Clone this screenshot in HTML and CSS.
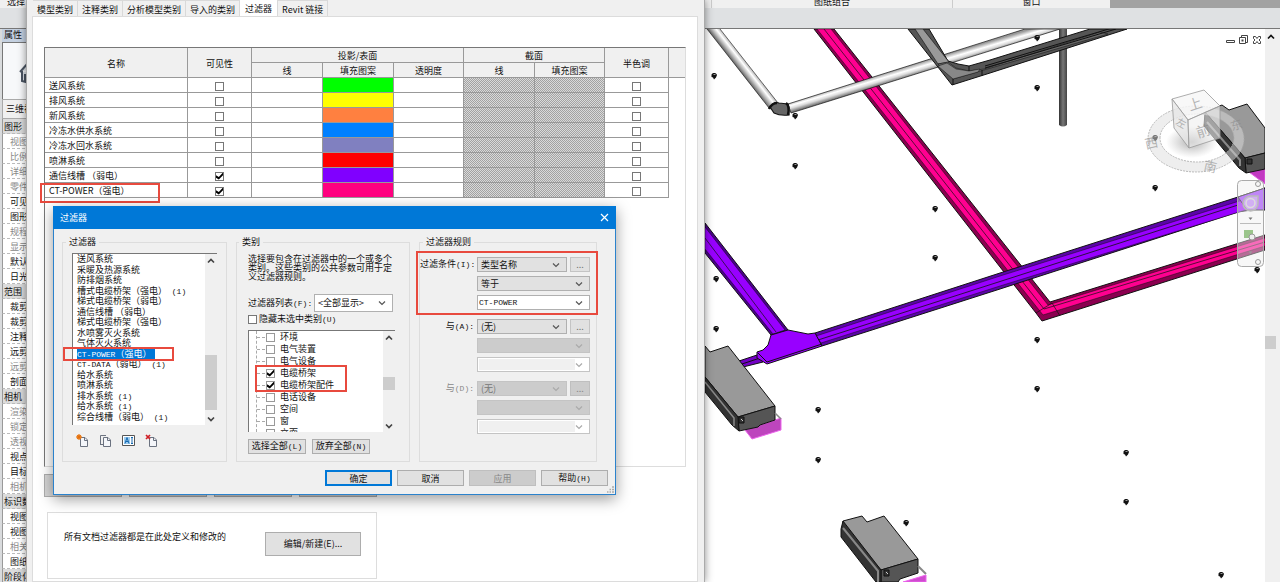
FILE: index.html
```html
<!DOCTYPE html>
<html lang="zh-CN">
<head>
<meta charset="utf-8">
<title>过滤器</title>
<link rel="stylesheet" href="styles.css">
</head>
<body>
<svg class="defs" aria-hidden="true">
  <symbol id="chev" viewBox="0 0 8 8"><path d="M1 2.5 4 5.5 7 2.5" fill="none" stroke="currentColor" stroke-width="1.2"/></symbol>
  <symbol id="up" viewBox="0 0 8 8"><path d="M1 5.5 4 2.5 7 5.5" fill="none" stroke="currentColor" stroke-width="1.7"/></symbol>
  <symbol id="down" viewBox="0 0 8 8"><path d="M1 2.5 4 5.5 7 2.5" fill="none" stroke="currentColor" stroke-width="1.7"/></symbol>
  <symbol id="page" viewBox="0 0 13 13"><path d="M4.500 3.500H9L11.500 6V12.500H4.500Z" fill="#f4f6fa" stroke="#6b7280"/><path d="M8.500 3.500V6.500H11.500" fill="none" stroke="#6b7280"/></symbol>
</svg>

<div class="app">
  <div class="ribbon">
    <span class="r-left">选择</span><span class="r-mid">图纸组合</span><span class="r-win">窗口</span><span class="r-end"></span>
  </div>
  <div class="band"></div>
  <div class="work">
    <aside class="props">
      <h2>属性</h2>
      <div class="preview"><svg width="18" height="24" viewBox="0 0 18 24"><path d="M1 11 9 2 17 11M3 10V20L10 22V9M10 22 17 19V11" fill="#dde2e8" stroke="#4b5563" stroke-width="2"/><path d="M5 13H8V20H5Z" fill="#4b5563"/></svg></div>
      <div class="view">三维视图</div>
      <ul class="plist">
        <li class="g">图形</li><li class="d">视图比例</li><li class="d">比例值</li><li class="d">详细程度</li><li class="d">零件可见性</li><li>可见性</li><li>图形显示</li><li class="d">规程</li><li class="d">显示隐藏</li><li>默认分析</li><li>日光路径</li>
        <li class="g">范围</li><li>裁剪视图</li><li>裁剪区域</li><li>注释裁剪</li><li>远剪裁</li><li class="d">远剪裁</li><li>剖面框</li>
        <li class="g">相机</li><li class="d">渲染设置</li><li class="d">锁定方向</li><li class="d">透视图</li><li>视点高度</li><li>目标高度</li><li class="d">相机位置</li>
        <li class="g">标识数据</li><li>视图样板</li><li>视图名称</li><li class="d">相关性</li><li>图纸标题</li>
        <li class="g">阶段化</li>
      </ul>
    </aside>

    <main class="canvas">
      <svg class="scene" viewBox="705 29 560 553" preserveAspectRatio="xMinYMin slice" role="img" aria-label="三维视图">
        <defs>
          <linearGradient id="p1" gradientUnits="userSpaceOnUse" x1="737" y1="68" x2="746" y2="61"><stop offset="0" stop-color="#555"/><stop offset=".3" stop-color="#aaa"/><stop offset=".65" stop-color="#fff"/><stop offset="1" stop-color="#aaa"/></linearGradient>
          <linearGradient id="p2" gradientUnits="userSpaceOnUse" x1="888" y1="72" x2="891" y2="82"><stop offset="0" stop-color="#999"/><stop offset=".4" stop-color="#fff"/><stop offset=".65" stop-color="#ddd"/><stop offset="1" stop-color="#777"/></linearGradient>
          <linearGradient id="p3"><stop offset="0" stop-color="#333"/><stop offset=".5" stop-color="#777"/><stop offset="1" stop-color="#444"/></linearGradient>
          <radialGradient id="sh"><stop offset="0" stop-color="#777" stop-opacity=".6"/><stop offset="1" stop-color="#999" stop-opacity="0"/></radialGradient>
          <g id="s"><path d="M-2.500 -1.500C-1 -3.500 2 -3.500 3 -1L2 1.500 0 3.500-1 1.500-2.500 1Z" fill="#111"/><path d="M-.5-1.500H1.500" stroke="#999"/></g>
        </defs>
        <g stroke="#111" stroke-width="1" stroke-linejoin="round">
          <!-- magenta tray -->
          <path d="M814 29H834L1050 302 1265 235V250L1042 321 1036 313Z" fill="#8b0050"/>
          <path d="M817 29H831L1048 305 1265 238V246L1043 315Z" fill="#ff0090" stroke-width=".5"/>
          <path d="M824 29 1044 309 1265 242M1036 313 1052 303M1052 303 1060 316" fill="none" stroke-width=".7"/>
          <!-- round pipes -->
          <path d="M707 29H720L778 103 769 108Z" fill="url(#p1)" stroke="none"/>
          <path d="M707 29 769 108M720 29 778 103" fill="none" stroke-width=".6"/>
          <path d="M788 104 1025 29H1060L791 113Z" fill="url(#p2)" stroke-width=".7"/>
          <path d="M770 107Q774 101 779 103L788 104 789 115Q780 116 774 113Z" fill="#666" stroke-width="1.200"/>
          <path d="M786 103Q790 106 788 115M769 109Q772 103 777 103" fill="none" stroke-width="2.500"/>
          <path d="M1059 29V125Q1063 128 1067 125V29Z" fill="url(#p3)" stroke="none"/>
          <!-- gray tray -->
          <path d="M908 29H929L948 61 958 64 969 66 990 60 1090 29H1127L990 73 952 85 934 62Z" fill="#555"/>
          <path d="M915 29H923L949 62 938 64Z" fill="#999" stroke-width=".6"/>
          <path d="M938 64 948 62 956 68 969 71 984 69 1100 32 1108 34 953 79Z" fill="#666" stroke-width=".5"/>
          <path d="M938 66 947 63 956 69 969 71 980 69 978 72 953 79Z" fill="#888" stroke-width=".5"/>
          <path d="M969 66V71M953 79V85M982 70V76M985 66 1112 28M985 68 1116 29" fill="none"/>
          <!-- violet tray -->
          <path d="M705 223 788 330 771 335 705 253Z" fill="#4b008c"/>
          <path d="M705 227 785 330 773 334 705 249Z" fill="#9800ff" stroke-width=".5"/>
          <path d="M705 238 776 332" fill="none" stroke-width=".7"/>
          <path d="M815 333 1000 273 1238 197 1265 188V208L1238 212 1000 289 822 346Z" fill="#5b05a8"/>
          <path d="M816 336 1000 276 1265 193V204L1000 286 821 343Z" fill="#9800ff" stroke-width=".5"/>
          <path d="M818 340 1238 205" fill="none" stroke-width=".8"/>
          <path d="M739 361 757 355 763 362 743 367ZM742 364 760 358" fill="#7200c4"/>
          <path d="M771 335 788 330 808 334 815 333 822 346 767 364 757 358V352L763 350 768 345Z" fill="#9800ff"/>
          <path d="M767 362 822 344M758 353 767 362" fill="none"/>
          <path d="M1238 197 1265 188V210H1247Z" fill="#9a32ff"/>
          <!-- equipment at the right edge -->
          <path d="M1249 172 1265 168V184Z" fill="#c238c2" stroke="#e060e0"/>
          <path d="M1205 112 1222 105 1229 110 1247 104 1265 128V153L1245 158Z" fill="#999"/>
          <path d="M1245 158 1265 153V169L1246 173Z" fill="#555"/>
          <path d="M1205 112 1245 158 1246 173 1239 168 1204 126Z" fill="#333"/>
          <path d="M1207 122 1240 160V166" fill="none" stroke="#888" stroke-width="2"/>
          <path d="M1247 159H1252V164H1247Z" fill="#333"/>
          <!-- equipment at the left edge -->
          <path d="M745 430 781 418V430L752 439Z" fill="#bd45bd" stroke="#ed65ed"/>
          <path d="M705 346 710 352 728 346 775 406 738 417 705 377Z" fill="#999"/>
          <path d="M738 417 775 406V420L760 425 758 427 739 431Z" fill="#555"/>
          <path d="M705 377 738 417 739 431 732 425 705 392Z" fill="#333"/>
          <path d="M705 382 734 418V426M775 413 781 419" fill="none" stroke="#888" stroke-width="1.500"/>
          <path d="M739 417H744V423H739Z" fill="#333"/><path d="M741 419 743 421" stroke="#ccc"/>
          <!-- equipment at the bottom -->
          <path d="M903 582 926 575V582Z" fill="#d04bd0" stroke="#ed65ed"/>
          <path d="M843 521 862 516 867 522 884 516 918 559 881 570 843 527Z" fill="#999"/>
          <path d="M881 570 918 559V573L900 579 898 582H881Z" fill="#555"/>
          <path d="M843 521 881 570V582H876L841 537V529Z" fill="#333"/>
          <path d="M843 528 878 571V582M918 566 926 574" fill="none" stroke="#888" stroke-width="2"/>
          <path d="M884 570H889V576H884Z" fill="#333"/><path d="M886 572 888 574" stroke="#ccc"/>
        </g>
        <g>
          <use href="#s" x="714" y="76"/><use href="#s" x="795" y="116"/><use href="#s" x="795" y="166"/><use href="#s" x="1037" y="38"/><use href="#s" x="1037" y="88"/><use href="#s" x="1155" y="138"/><use href="#s" x="1155" y="188"/><use href="#s" x="935" y="209"/><use href="#s" x="935" y="258"/><use href="#s" x="716" y="279"/><use href="#s" x="716" y="329"/><use href="#s" x="818" y="410"/><use href="#s" x="818" y="460"/><use href="#s" x="1037" y="340"/><use href="#s" x="1037" y="389"/><use href="#s" x="1126" y="453"/><use href="#s" x="1126" y="502"/><use href="#s" x="906" y="523"/><use href="#s" x="1221" y="575"/><use href="#s" x="1257" y="270"/>
        </g>
        <!-- view cube -->
        <ellipse cx="1192" cy="142" rx="26" ry="16" fill="url(#sh)"/>
        <path fill-rule="evenodd" d="M1148 139A48 33 0 1 0 1244 139A48 33 0 1 0 1148 139ZM1160 138A37 24 0 1 1 1234 138A37 24 0 1 1 1160 138Z" fill="#ddd" fill-opacity=".5" stroke="#aaa" stroke-width=".8" stroke-dasharray="2 1"/>
        <g stroke="#999" stroke-width=".8" stroke-linejoin="round" fill-opacity=".82">
          <path d="M1172 99 1204 90 1220 106 1188 120Z" fill="#f6f6f6"/>
          <path d="M1172 99 1188 120 1189 148 1174 128Z" fill="#e6e6e6"/>
          <path d="M1188 120 1220 106V138L1189 148Z" fill="#eee" fill-opacity=".6"/>
        </g>
        <g class="cube-text">
          <text transform="translate(1190 111) rotate(-18)" font-size="14">上</text>
          <text transform="translate(1175 124) rotate(28)" font-size="10">左</text>
          <text transform="translate(1198 138) rotate(-18)" font-size="14">前</text>
          <text transform="translate(1146 149) rotate(-12)" font-size="13">西</text>
          <text transform="translate(1203 170) rotate(12)" font-size="13">南</text>
          <text transform="translate(1232 131) rotate(-18)" font-size="12">东</text>
        </g>
        <!-- navigation bar -->
        <rect x="1237.500" y="180.500" width="26" height="86" rx="4" fill="#eee" fill-opacity=".45" stroke="#aaa"/>
        <g fill="none" stroke="#999">
          <circle cx="1258" cy="184" r="2.500"/><circle cx="1258" cy="262" r="2.500"/>
          <path d="M1251 196H1258V203A7.500 7.500 0 1 1 1251 196Z" fill="#eee" fill-opacity=".4" stroke="#bbb" stroke-width="1.500"/><circle cx="1250.500" cy="203" r="4.500" stroke="#ddd" stroke-width="1.500"/>
          <path d="M1240 223.500H1261" stroke="#bbb"/><path d="M1248.500 217.500H1252.500L1250.500 220Z" fill="#777" stroke="none"/>
          <path d="M1244 230H1253V238H1244Z" fill="#9bc58b" stroke="none"/><circle cx="1252" cy="237" r="3" fill="#eee"/><path d="M1248.500 251.500H1252.500L1250.500 254Z" fill="#999" stroke="none"/>
        </g>
        <!-- view window controls -->
        <g fill="#fff" stroke="#444">
          <path d="M1226.500 40.500H1234.500V42.500H1226.500Z"/><path d="M1241.500 35.500H1247.500V42.500H1241.500Z"/><path d="M1239.500 37.500H1245.500V43.500H1239.500Z"/><path d="M1241.500 40.500H1243.500" stroke-width="2"/>
          <path d="M1253.500 36.500H1255.500L1257 38.500 1258.500 36.500H1260.500V38.500L1259 40 1260.500 41.500V43.500H1258.500L1257 41.500 1255.500 43.500H1253.500V41.500L1255 40 1253.500 38.500Z"/>
        </g>
      </svg>
      <div class="vscroll"><svg width="8" height="8"><use href="#up"/></svg><i></i></div>
    </main>
  </div>
</div>

<section class="vg">
  <nav class="tabs"><button>模型类别</button><button>注释类别</button><button>分析模型类别</button><button>导入的类别</button><button class="on">过滤器</button><button>Revit 链接</button></nav>
  <div class="sheet">
    <div class="tbox">
      <table>
        <colgroup><col class="c-name"><col class="c-chk"><col class="c-pat"><col class="c-pat"><col class="c-num"><col class="c-pat"><col class="c-num"><col class="c-chk"><col></colgroup>
        <thead>
          <tr><th rowspan="2">名称</th><th rowspan="2">可见性</th><th colspan="3">投影/表面</th><th colspan="2">截面</th><th rowspan="2">半色调</th><th rowspan="2" class="last"></th></tr>
          <tr><th>线</th><th>填充图案</th><th>透明度</th><th>线</th><th>填充图案</th></tr>
        </thead>
        <tbody>
          <tr><td>送风系统</td><td><input type="checkbox" aria-label="可见性"></td><td></td><td class="green"></td><td></td><td class="hatch"></td><td class="hatch"></td><td><input type="checkbox" aria-label="半色调"></td></tr>
          <tr><td>排风系统</td><td><input type="checkbox" aria-label="可见性"></td><td></td><td class="yellow"></td><td></td><td class="hatch"></td><td class="hatch"></td><td><input type="checkbox" aria-label="半色调"></td></tr>
          <tr><td>新风系统</td><td><input type="checkbox" aria-label="可见性"></td><td></td><td class="orange"></td><td></td><td class="hatch"></td><td class="hatch"></td><td><input type="checkbox" aria-label="半色调"></td></tr>
          <tr><td>冷冻水供水系统</td><td><input type="checkbox" aria-label="可见性"></td><td></td><td class="blue"></td><td></td><td class="hatch"></td><td class="hatch"></td><td><input type="checkbox" aria-label="半色调"></td></tr>
          <tr><td>冷冻水回水系统</td><td><input type="checkbox" aria-label="可见性"></td><td></td><td class="slate"></td><td></td><td class="hatch"></td><td class="hatch"></td><td><input type="checkbox" aria-label="半色调"></td></tr>
          <tr><td>喷淋系统</td><td><input type="checkbox" aria-label="可见性"></td><td></td><td class="red"></td><td></td><td class="hatch"></td><td class="hatch"></td><td><input type="checkbox" aria-label="半色调"></td></tr>
          <tr><td>通信线槽 （弱电）</td><td><input type="checkbox" checked aria-label="可见性"></td><td></td><td class="violet"></td><td></td><td class="hatch"></td><td class="hatch"></td><td><input type="checkbox" aria-label="半色调"></td></tr>
          <tr class="marked"><td>CT-POWER（强电）</td><td><input type="checkbox" checked aria-label="可见性"></td><td></td><td class="pink"></td><td></td><td class="hatch"></td><td class="hatch"></td><td><input type="checkbox" aria-label="半色调"></td></tr>
        </tbody>
      </table>
    </div>
    <div class="acts"><button aria-label="添加"></button><button aria-label="删除"></button><button aria-label="向上"></button><button aria-label="向下"></button></div>
    <div class="note"><p>所有文档过滤器都是在此处定义和修改的</p><button>编辑/新建(E)...</button></div>
  </div>
</section>

<section class="dlg" role="dialog" aria-label="过滤器">
  <header><h1>过滤器</h1><button aria-label="关闭"><svg width="9" height="9" viewBox="0 0 9 9"><path d="M1 1 8 8M8 1 1 8" stroke="#fff" stroke-width="1.200"/></svg></button></header>
  <div class="groups">
    <div class="grp g1">
      <h3>过滤器</h3>
      <div class="list">
        <ul role="listbox" aria-label="过滤器">
          <li>送风系统</li><li>采暖及热源系统</li><li>防排烟系统</li><li>槽式电缆桥架（强电）<span class="n"> (1)</span></li><li>梯式电缆桥架（弱电）</li><li>通信线槽 （弱电）</li><li>梯式电缆桥架（强电）</li><li>水喷雾灭火系统</li><li>气体灭火系统</li><li class="sel"><span><span class="n">CT-POWER</span>（强电）</span></li><li><span class="n">CT-DATA</span>（弱电）<span class="n"> (1)</span></li><li>给水系统</li><li>喷淋系统</li><li>排水系统<span class="n"> (1)</span></li><li>给水系统<span class="n"> (1)</span></li><li>综合线槽（弱电）<span class="n"> (1)</span></li>
        </ul>
        <div class="sb"><svg width="8" height="8"><use href="#up"/></svg><i></i><svg width="8" height="8"><use href="#down"/></svg></div>
      </div>
      <div class="tools">
        <button aria-label="新建"><svg width="13" height="13"><use href="#page"/><circle cx="3" cy="3" r="2.500" fill="#f08a24"/><path d="M3 0V6M0 3H6M1 1 5 5M5 1 1 5" stroke="#e06a10" stroke-width=".7"/></svg></button>
        <button aria-label="复制"><svg width="13" height="13"><path d="M1.500 11V1.500H7" fill="none" stroke="#6b7280"/><path d="M1.500 10.500H4" stroke="#6b7280"/><use href="#page"/></svg></button>
        <button aria-label="重命名"><svg width="13" height="13" viewBox="0 0 13 13"><path d="M.5 1.500H12.500V11.500H.5Z" fill="#fff" stroke="#555"/><path d="M2 3H8V10H2Z" fill="#9cccf0"/><path d="M3 9.500 5 3.500 7 9.500M4 7.500H6M9 3.500H11M10 3.500V9.500M9 9.500H11" fill="none" stroke="#1669b0"/></svg></button>
        <button aria-label="删除"><svg width="13" height="13"><use href="#page"/><path d="M1 1 5 5M5 1 1 5" stroke="#d11f26" stroke-width="1.700"/></svg></button>
      </div>
    </div>

    <div class="grp g2">
      <h3>类别</h3>
      <p>选择要包含在过滤器中的一个或多个类别。这些类别的公共参数可用于定义过滤器规则。</p>
      <div class="row"><label for="flist">过滤器列表<span class="n">(F):</span></label><span class="combo white"><select id="flist"><option>&lt;全部显示&gt;</option></select><svg width="8" height="8"><use href="#chev"/></svg></span></div>
      <label class="hide"><input type="checkbox"><span>隐藏未选中类别<span class="n">(U)</span></span></label>
      <div class="tree">
        <ul>
          <li><label><input type="checkbox">环境</label></li><li><label><input type="checkbox">电气装置</label></li><li><label><input type="checkbox">电气设备</label></li><li><label><input type="checkbox" checked>电缆桥架</label></li><li><label><input type="checkbox" checked>电缆桥架配件</label></li><li><label><input type="checkbox">电话设备</label></li><li><label><input type="checkbox">空间</label></li><li><label><input type="checkbox">窗</label></li><li><label><input type="checkbox">立面</label></li>
        </ul>
        <div class="sb"><svg width="8" height="8"><use href="#up"/></svg><i></i><svg width="8" height="8"><use href="#down"/></svg></div>
      </div>
      <div class="pick"><button>选择全部<span class="n">(L)</span></button><button>放弃全部<span class="n">(N)</span></button></div>
    </div>

    <div class="grp g3">
      <h3>过滤器规则</h3>
      <div class="rule marked">
        <label for="r1">过滤条件<span class="n">(I):</span></label><span class="combo"><select id="r1"><option>类型名称</option></select><svg width="8" height="8"><use href="#chev"/></svg></span><button class="dots">...</button>
        <span class="combo wide"><select aria-label="运算符"><option>等于</option></select><svg width="8" height="8"><use href="#chev"/></svg></span>
        <span class="combo wide white"><input type="text" class="n" value="CT-POWER" aria-label="值"><svg width="8" height="8"><use href="#chev"/></svg></span>
      </div>
      <div class="rule">
        <label for="r2">与<span class="n">(A):</span></label><span class="combo"><select id="r2"><option>(无)</option></select><svg width="8" height="8"><use href="#chev"/></svg></span><button class="dots">...</button>
        <span class="combo wide off"><select disabled aria-label="运算符"></select><svg width="8" height="8"><use href="#chev"/></svg></span>
        <span class="combo wide white off"><input type="text" disabled aria-label="值"><svg width="8" height="8"><use href="#chev"/></svg></span>
      </div>
      <div class="rule dim">
        <label for="r3">与<span class="n">(D):</span></label><span class="combo off"><select id="r3" disabled><option>(无)</option></select><svg width="8" height="8"><use href="#chev"/></svg></span><button class="dots" disabled>...</button>
        <span class="combo wide off"><select disabled aria-label="运算符"></select><svg width="8" height="8"><use href="#chev"/></svg></span>
        <span class="combo wide white off"><input type="text" disabled aria-label="值"><svg width="8" height="8"><use href="#chev"/></svg></span>
      </div>
    </div>
  </div>
  <footer><button class="ok">确定</button><button>取消</button><button disabled>应用</button><button>帮助<span class="n">(H)</span></button></footer>
  <svg class="grip" width="7" height="7"><path d="M5 1H7M5 3.500H7M2.500 3.500H4M5 6H7M2.500 6H4M0 6H1.500" stroke="#aaa" stroke-width="1.500"/></svg>
</section>
</body>
</html>
```

FILE: styles.css
```css
*, *::before, *::after { box-sizing: border-box; margin: 0; padding: 0; }
body {
  font: 9px/12px "Noto Sans CJK SC", sans-serif;
  color: #111;
  background: #fff;
  height: 100vh;
  overflow: hidden;
  position: relative;
}
button, input, select { font: inherit; color: inherit; appearance: none; border-radius: 0; }
button { background: #e1e1e1; border: 1px solid #adadad; white-space: nowrap; }
button:disabled { background: #ccc; border-color: #bfbfbf; color: #888; }
ul { list-style: none; }
h1, h2, h3 { font-size: 9px; font-weight: 400; }
svg { display: block; }
.defs { position: absolute; width: 0; height: 0; }
.n { font-family: "Liberation Mono", monospace; font-size: 8px; white-space: pre; }

input[type="checkbox"] {
  width: 9px; height: 9px;
  flex: none;
  border: 1px solid #777;
  background: #fff;
  display: grid;
}
input[type="checkbox"]:checked::before {
  content: "";
  background: #000;
  clip-path: polygon(0 40%, 40% 65%, 100% 0, 100% 40%, 40% 100%, 0 75%);
}

/* main window */
.app { height: 100%; display: flex; flex-direction: column; }
.ribbon { flex: none; height: 8px; display: flex; background: #f0f0f0; overflow: hidden; line-height: 10px; }
.ribbon span { flex: none; margin-top: -3px; }
.ribbon .r-left { width: 711px; padding-left: 7px; }
.ribbon .r-mid { width: 241px; text-align: center; border-left: 1px solid #ccc; }
.ribbon .r-win { width: 158px; text-align: center; border-left: 1px solid #ccc; }
.ribbon .r-end { flex: 1; background: #a2a2a2; margin-top: 0; }
.band { flex: none; height: 21px; background: #dfe1e3; border-bottom: 1px solid #777; }
.work { flex: 1; min-height: 0; display: flex; }
.props { flex: none; width: 705px; border-left: 2px solid #d9dbdd; background: #fff; }
.props h2 { background: #c4d0e0; padding-left: 2px; height: 13px; }
.preview { height: 57px; border: 1px solid #777; border-width: 1px 0 0 1px; padding: 18px 0 0 16px; background: #f7f8fa; }
.view { height: 20px; border: 1px solid #aaa; background: #f0f0f0; line-height: 18px; padding-left: 3px; }
.plist li { height: 15px; line-height: 15px; padding-left: 7px; border-bottom: 1px dashed #bbb; border-left: 1px solid #999; }
.plist .g { background: #dcdcdc; padding-left: 1px; }
.plist .d { color: #888; }
.canvas { flex: 1; min-width: 0; display: flex; }
.scene { flex: 1; min-width: 0; height: 100%; }
.cube-text { fill: #888; fill-opacity: .6; }
.vscroll { flex: none; width: 15px; background: #f0f0f0; display: flex; flex-direction: column; align-items: flex-start; padding: 4px 2px; }
.vscroll i { width: 11px; height: 13px; margin: 295px 0 0 -2px; background: #cdcdcd; }

/* visibility window */
.vg {
  position: absolute; left: 26px; top: 0; bottom: 0; width: 679px;
  background: #f0f0f0;
  border: solid #aaa; border-width: 0 1px;
  padding: 0 6px 0 5px;
  box-shadow: 0 0 8px rgba(0, 0, 0, .45);
  display: flex; flex-direction: column;
}
.tabs { flex: none; height: 16px; display: flex; align-items: flex-end; padding-left: 1px; }
.tabs button { height: 16px; border: 1px solid #d9d9d9; border-width: 1px 1px 0 0; background: #f0f0f0; padding: 1px 4px 0; line-height: 15px; }
.tabs .on { background: #fff; padding: 0 5px; margin-bottom: -1px; height: 17px; line-height: 12px; border-top: 0; }
.sheet { flex: 1; border: 1px solid #dcdcdc; background: #fff; padding: 30px 11px 0; }
.tbox { height: 420px; border: 1px solid #ddd; border-left: 1px solid #777; border-top: 1px solid #777; }
table { width: 100%; table-layout: fixed; border-spacing: 0; }
.c-name { width: 143px; }
.c-chk { width: 64px; }
.c-pat { width: 71px; }
.c-num { width: 70px; }
th, td { height: 15px; padding-top: 2px; line-height: 12px; border: solid #999; border-width: 0 1px 1px 0; white-space: nowrap; }
th { font-weight: 400; background: #f0f0f0; text-align: center; }
th.last { border-right: 0; }
td:first-child { padding-left: 4px; }
td input[type="checkbox"] { margin: 0 auto; }
tr.marked td:first-child { position: relative; }
tr.marked td:first-child::after {
  content: ""; position: absolute; left: -5px; top: 0; width: 120px; height: 20px;
  border: 2px solid #e84a3e;
}
.green { background: #0f0; } .yellow { background: #ff0; } .orange { background: #ff8040; } .blue { background: #0080ff; }
.slate { background: #8080c0; } .red { background: #f00; } .violet { background: #8000ff; } .pink { background: #ff0080; }
.hatch { background: conic-gradient(#a2a2a2 25%, #dadada 0 50%, #a2a2a2 0 75%, #dadada 0) 0 0 / 2px 2px; }
.acts { display: flex; gap: 7px; padding-top: 7px; }
.acts button { width: 78px; height: 23px; background: #d5d5d5; }
.note { margin: 15px 0 0 3px; width: 330px; height: 67px; border: 1px solid #ddd; display: flex; justify-content: space-between; padding: 18px 15px 0 16px; }
.note p { line-height: 12px; }
.note button { width: 96px; height: 24px; margin-top: 1px; }

/* filter dialog */
.dlg {
  position: absolute; left: 53px; top: 206px; width: 563px;
  background: #f0f0f0;
  border: 1px solid #2b82cc;
  box-shadow: 0 4px 14px rgba(0, 0, 0, .4);
}
.dlg header { height: 23px; margin: -1px -1px 0; background: #0078d7; color: #fff; display: flex; align-items: center; justify-content: space-between; padding: 0 7px; }
.dlg header button { border: 0; background: none; }
.groups { display: flex; gap: 9px; padding: 13px 18px 0 8px; }
.grp { height: 220px; border: 1px solid #ddd; display: flex; flex-direction: column; }
.grp h3 { flex: none; height: 12px; margin: -7px 0 0 3px; padding: 0 3px; align-self: flex-start; background: #f0f0f0; }
.g1 { width: 165px; }
.g2 { width: 174px; padding: 0 13px 0 11px; }
.g2 h3 { margin-left: -9px; }
.g3 { flex: 1; padding-right: 6px; }

.list { margin: 5px 9px 0; height: 172px; background: #fff; border: 1px solid #777; border-width: 1px 0 0 1px; display: flex; }
.list ul { flex: 1; display: flex; flex-direction: column; justify-content: space-between; padding: 0 0 3px; }
.list li { height: 10px; line-height: 10px; padding-left: 4px; white-space: nowrap; }
.sel > span { display: inline-block; background: #0078d7; color: #fff; padding-right: 4px; height: 10px; line-height: 10px; vertical-align: top; }
.g1 .sel { position: relative; }
.g1 .sel::after { content: ""; position: absolute; left: -10px; top: -2px; width: 111px; height: 14px; border: 2px solid #e84a3e; }
.sb { flex: none; width: 12px; background: #f0f0f0; display: flex; flex-direction: column; align-items: center; padding: 3px 0 2px; color: #444; }
.sb i { width: 100%; background: #cdcdcd; }
.list .sb i { height: 55px; margin: 90px 0 auto; }
.tools { display: flex; gap: 10px; padding: 9px 0 0 13px; }
.tools button { border: 0; background: none; }

.g2 p { line-height: 9px; margin: 6px 0 0; width: 145px; }
.row { display: flex; align-items: center; justify-content: space-between; margin-top: 13px; width: 145px; white-space: nowrap; }
.row .combo { width: 79px; height: 18px; }
.hide { display: flex; align-items: center; gap: 2px; margin-top: 1px; }
.tree { margin-top: 4px; height: 102px; width: 147px; background: #fff; border: 1px solid #777; border-width: 1px 0 0 1px; display: flex; position: relative; }
.tree ul { flex: 1; overflow: hidden; margin-left: 7px; border-left: 1px dashed #aaa; }
.tree li { height: 12px; line-height: 12px; }
.tree label { display: flex; align-items: center; gap: 5px; }
.tree label::before { content: ""; width: 8px; margin-right: -4px; border-top: 1px dashed #aaa; }
.tree input[type="checkbox"] { border-color: #999; }
.tree::after { content: ""; position: absolute; left: 6px; top: 34px; width: 92px; height: 27px; border: 2px solid #e84a3e; }
.tree .sb i { height: 13px; margin: 35px 0 auto; }
.pick { display: flex; gap: 6px; margin-top: 7px; }
.pick button { width: 58px; height: 15px; line-height: 12px; }

.combo { display: grid; grid-template-columns: minmax(0, 1fr) 14px; align-items: center; background: #e1e1e1; border: 1px solid #b0b0b0; height: 15px; color: #111; min-width: 0; }
.combo select, .combo input { grid-area: 1 / 1 / 2 / 3; width: 100%; height: 13px; border: 0; background: none; padding: 0 3px; line-height: 12px; opacity: 1; }
.combo input { padding: 0 1px; }
.combo svg { grid-area: 1 / 2; pointer-events: none; color: #555; }
.combo.white { background: #fff; }
.combo.off { background: #ccc; border-color: #c4c4c4; color: #777; }
.combo.off svg { color: #aaa; }
.combo.white.off { background: #fff; }
.combo.white.off input { background: #f0f0f0; width: auto; height: 11px; margin: 0 14px 0 1px; }
.rule { display: grid; grid-template-columns: minmax(0, 1fr) 90px 20px; column-gap: 3px; row-gap: 4px; grid-template-rows: repeat(3, 15px); margin-bottom: 9px; position: relative; }
.g3 h3 + .rule { margin-top: 9px; }
.rule label { text-align: right; line-height: 14px; white-space: nowrap; }
.rule .wide { grid-column: 2 / 4; }
.rule.dim label { color: #888; }
.rule.marked::after { content: ""; position: absolute; left: -4px; right: -8px; top: -6px; bottom: -5px; border: 2px solid #e84a3e; pointer-events: none; }
.dots { line-height: 9px; color: #777; border-color: #c4c4c4; }
.dlg footer { display: flex; justify-content: flex-end; gap: 5px; padding: 8px 7px 8px; }
.dlg footer button { width: 67px; height: 16px; line-height: 13px; }
.dlg footer .ok { border: 2px solid #0078d7; line-height: 11px; }
.grip { position: absolute; right: 1px; bottom: 1px; }
```
